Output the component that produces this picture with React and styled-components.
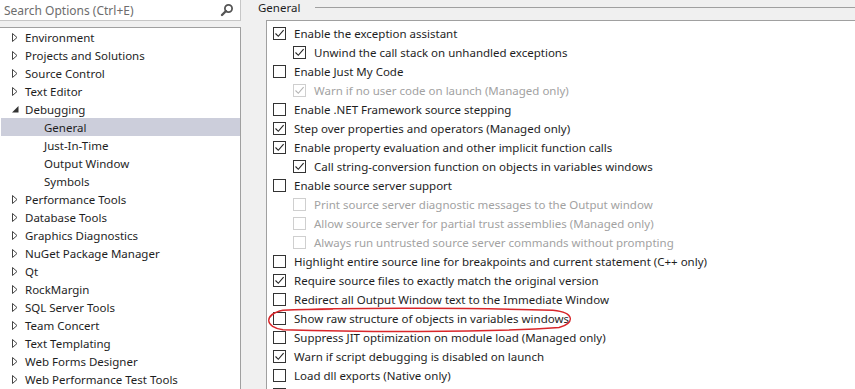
import React from "react";
import styled, { createGlobalStyle } from "styled-components";

const GlobalStyle = createGlobalStyle`
  html, body {
    margin: 0;
    padding: 0;
    background: #f0f0f0;
  }
  body {
    font-family: "Noto Sans", "Open Sans", sans-serif;
    font-size: 11.5px;
    color: #1e1e1e;
  }
`;

const treeItems = [
  { label: "Environment", level: 0, state: "closed" },
  { label: "Projects and Solutions", level: 0, state: "closed" },
  { label: "Source Control", level: 0, state: "closed" },
  { label: "Text Editor", level: 0, state: "closed" },
  { label: "Debugging", level: 0, state: "open" },
  { label: "General", level: 1, selected: true },
  { label: "Just-In-Time", level: 1 },
  { label: "Output Window", level: 1 },
  { label: "Symbols", level: 1 },
  { label: "Performance Tools", level: 0, state: "closed" },
  { label: "Database Tools", level: 0, state: "closed" },
  { label: "Graphics Diagnostics", level: 0, state: "closed" },
  { label: "NuGet Package Manager", level: 0, state: "closed" },
  { label: "Qt", level: 0, state: "closed" },
  { label: "RockMargin", level: 0, state: "closed" },
  { label: "SQL Server Tools", level: 0, state: "closed" },
  { label: "Team Concert", level: 0, state: "closed" },
  { label: "Text Templating", level: 0, state: "closed" },
  { label: "Web Forms Designer", level: 0, state: "closed" },
  { label: "Web Performance Test Tools", level: 0, state: "closed" },
];

const options = [
  { label: "Enable the exception assistant", checked: true },
  { label: "Unwind the call stack on unhandled exceptions", checked: true, indent: true },
  { label: "Enable Just My Code" },
  { label: "Warn if no user code on launch (Managed only)", checked: true, indent: true, disabled: true },
  { label: "Enable .NET Framework source stepping" },
  { label: "Step over properties and operators (Managed only)", checked: true },
  { label: "Enable property evaluation and other implicit function calls", checked: true },
  { label: "Call string-conversion function on objects in variables windows", checked: true, indent: true },
  { label: "Enable source server support" },
  { label: "Print source server diagnostic messages to the Output window", indent: true, disabled: true },
  { label: "Allow source server for partial trust assemblies (Managed only)", indent: true, disabled: true },
  { label: "Always run untrusted source server commands without prompting", indent: true, disabled: true },
  { label: "Highlight entire source line for breakpoints and current statement (C++ only)" },
  { label: "Require source files to exactly match the original version", checked: true },
  { label: "Redirect all Output Window text to the Immediate Window" },
  { label: "Show raw structure of objects in variables windows", circled: true },
  { label: "Suppress JIT optimization on module load (Managed only)" },
  { label: "Warn if script debugging is disabled on launch", checked: true },
  { label: "Load dll exports (Native only)" },
  // next row only peeks in at the bottom edge
  { label: "", key: "more" },
];

const App = () => {
  return (
    <>
      <GlobalStyle />
      <Page>
        <Sidebar>
          <SearchBox>
            <SearchText>Search Options (Ctrl+E)</SearchText>
            <SearchIcon viewBox="0 0 14 14">
              <circle cx="8.5" cy="5.5" r="3.6" fill="none" stroke="#555" strokeWidth="1.8" />
              <line x1="6" y1="8" x2="2" y2="12" stroke="#555" strokeWidth="2.4" strokeLinecap="round" />
            </SearchIcon>
          </SearchBox>
          <TreePanel>
            {treeItems.map((item) => (
              <TreeRow key={item.label} $selected={item.selected} $level={item.level}>
                <Expander>
                  {item.state === "closed" && (
                    <svg width="6" height="9" viewBox="0 0 6 9">
                      <path d="M0.5 0.5 L5 4.5 L0.5 8.5 Z" fill="none" stroke="#444" strokeWidth="1" />
                    </svg>
                  )}
                  {item.state === "open" && (
                    <svg width="7" height="7" viewBox="0 0 7 7">
                      <path d="M6.5 0 L6.5 6.5 L0 6.5 Z" fill="#333" />
                    </svg>
                  )}
                </Expander>
                <TreeLabel>{item.label}</TreeLabel>
              </TreeRow>
            ))}
          </TreePanel>
        </Sidebar>
        <Main>
          <GroupHeader>
            <GroupTitle>General</GroupTitle>
            <GroupRule />
          </GroupHeader>
          <OptionsPanel>
            {options.map((opt) => (
              <OptionRow key={opt.key || opt.label} $indent={opt.indent} $disabled={opt.disabled}>
                <Checkbox $disabled={opt.disabled}>
                  {opt.checked && (
                    <svg width="11" height="11" viewBox="0 0 11 11">
                      <path d="M1.5 5.5 L4.3 8.3 L9.6 2.2" fill="none" stroke={opt.disabled ? "#b4b4b4" : "#222"} strokeWidth="1.1" />
                    </svg>
                  )}
                </Checkbox>
                {opt.label && <OptionLabel>{opt.label}</OptionLabel>}
                {opt.circled && (
                  <Circle viewBox="0 0 312 24" preserveAspectRatio="none">
                    <path
                      d="M20 3 C90 0 220 1 290 3 C312 5 312 15 296 19 C220 24 90 23 20 21 C2 19 0 7 20 3 C40 2 60 2 70 2"
                      fill="none"
                      stroke="#d8262a"
                      strokeWidth="1.4"
                    />
                  </Circle>
                )}
              </OptionRow>
            ))}
          </OptionsPanel>
        </Main>
      </Page>
    </>
  );
};

export default App;

const Page = styled.div`
  display: flex;
  width: 855px;
  height: 389px;
  overflow: hidden;
  background: #f0f0f0;
`;

const Sidebar = styled.div`
  display: flex;
  flex-direction: column;
  width: 241px;
  flex-shrink: 0;
  gap: 6px;
`;

const SearchBox = styled.div`
  display: flex;
  align-items: center;
  justify-content: space-between;
  height: 20px;
  background: #fff;
  border: 1px solid #c6c6c6;
  border-left: none;
  border-top: none;
  padding: 0 6px 0 4px;
`;

const SearchText = styled.span`
  color: #6d6d6d;
  font-size: 12px;
`;

const SearchIcon = styled.svg`
  width: 14px;
  height: 14px;
`;

const TreePanel = styled.div`
  flex: 1;
  background: #fff;
  border-top: 1px solid #a0a0a0;
  border-right: 1px solid #a0a0a0;
  padding-left: 1px;
`;

const TreeRow = styled.div`
  display: flex;
  align-items: center;
  height: 18px;
  padding-left: ${(p) => (p.$level ? 30 : 11)}px;
  background: ${(p) => (p.$selected ? "#cccedb" : "transparent")};
`;

const Expander = styled.span`
  display: inline-flex;
  align-items: center;
  width: 13px;
`;

const TreeLabel = styled.span`
  white-space: nowrap;
`;

const Main = styled.div`
  flex: 1;
  display: flex;
  flex-direction: column;
  padding-left: 17px;
  min-width: 0;
`;

const GroupHeader = styled.div`
  display: flex;
  align-items: center;
  height: 17px;
  gap: 15px;
`;

const GroupTitle = styled.span`
  white-space: nowrap;
`;

const GroupRule = styled.div`
  flex: 1;
  height: 1px;
  background: #a0a0a0;
`;

const OptionsPanel = styled.div`
  flex: 1;
  margin-top: 5px;
  margin-left: 8px;
  background: #fff;
  border-top: 1px solid #a0a0a0;
  border-left: 1px solid #a0a0a0;
  padding-top: 3px;
`;

const OptionRow = styled.div`
  position: relative;
  display: flex;
  align-items: center;
  height: 19px;
  padding-left: ${(p) => (p.$indent ? 26 : 6)}px;
  color: ${(p) => (p.$disabled ? "#a2a2a2" : "#1e1e1e")};
  white-space: nowrap;
`;

const Checkbox = styled.span`
  display: inline-flex;
  align-items: center;
  justify-content: center;
  box-sizing: border-box;
  width: 13px;
  height: 13px;
  border: 1px solid ${(p) => (p.$disabled ? "#cfcfcf" : "#333")};
  background: #fff;
  margin-right: 8px;
  flex-shrink: 0;
`;

const OptionLabel = styled.span``;

const Circle = styled.svg`
  position: absolute;
  left: -4px;
  top: -2px;
  width: 312px;
  height: 26px;
  pointer-events: none;
`;
